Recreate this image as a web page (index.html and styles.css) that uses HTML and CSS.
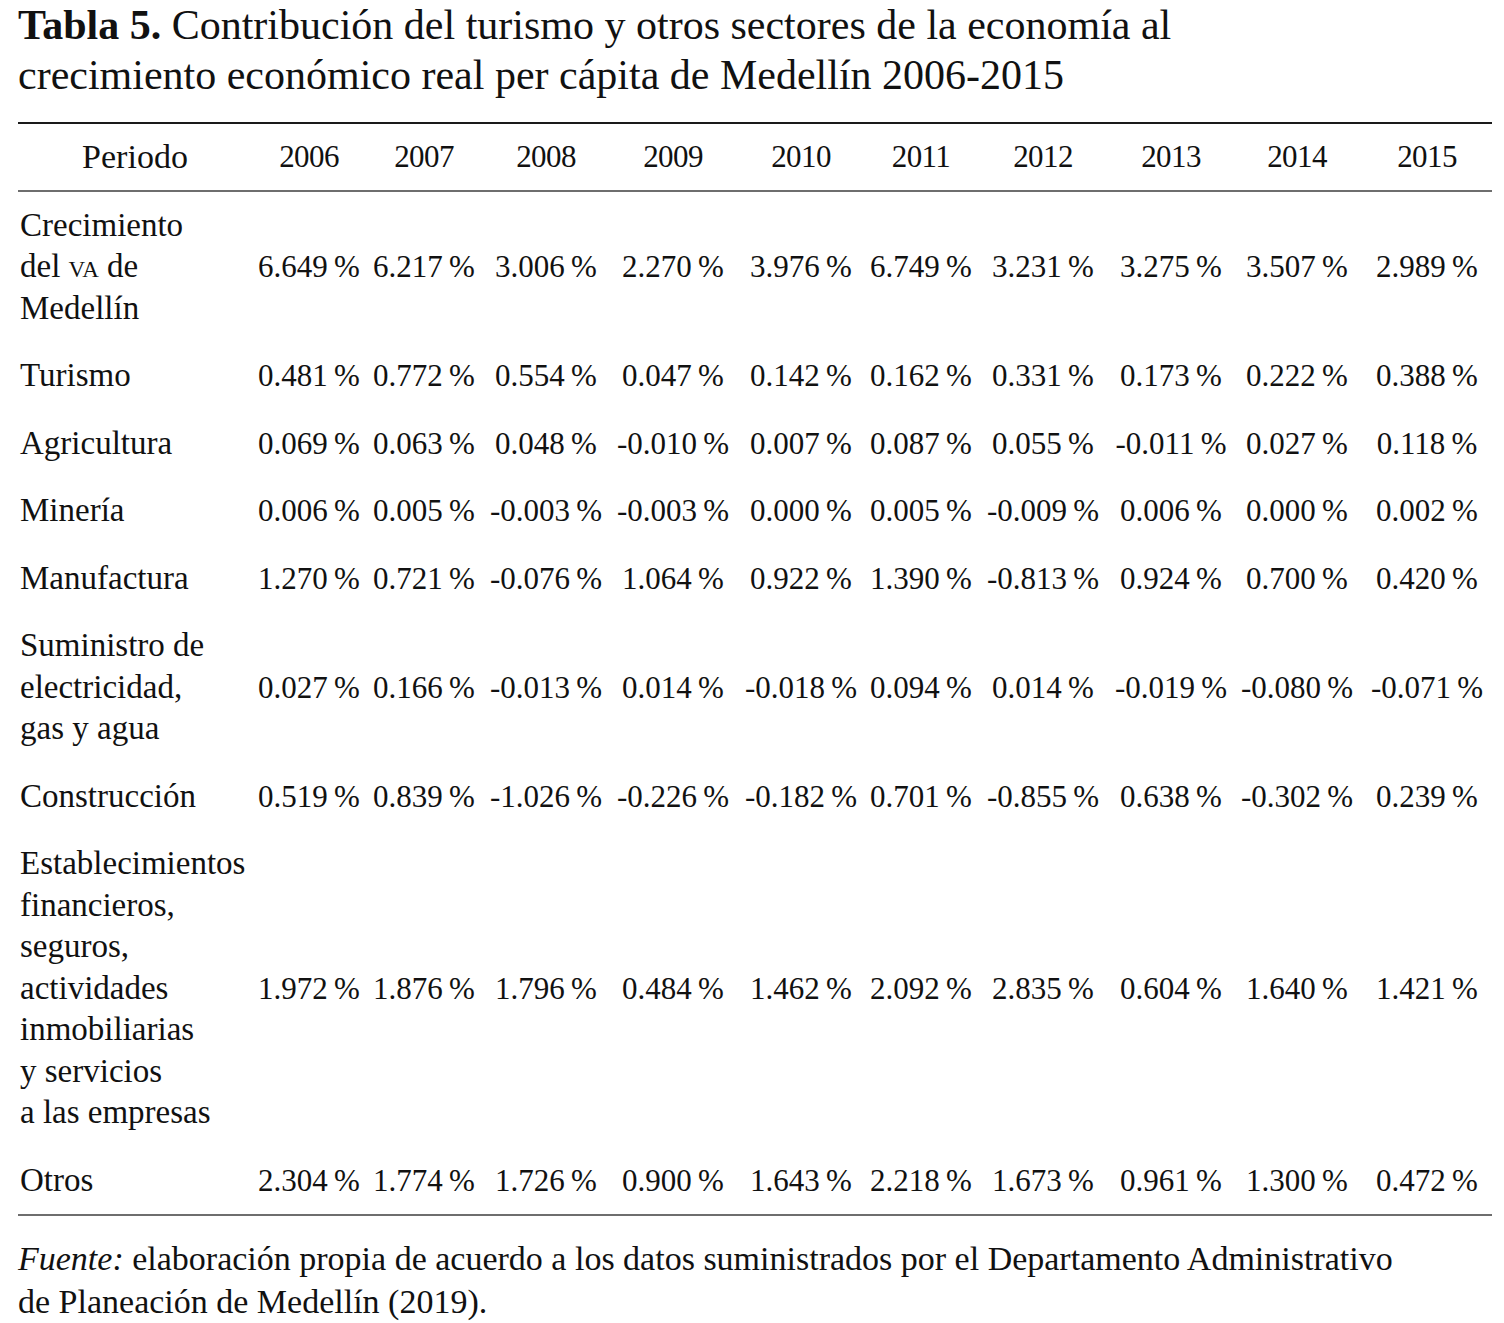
FILE: index.html
```html
<!DOCTYPE html>
<html lang="es">
<head>
<meta charset="utf-8">
<title>Tabla 5</title>
<link rel="stylesheet" href="styles.css">
</head>
<body>
<div class="page">
  <h1 class="caption"><b>Tabla 5.</b> Contribución del turismo y otros sectores de la economía al<br>crecimiento económico real per cápita de Medellín 2006-2015</h1>
  <table class="data">
    <colgroup>
      <col class="c-label">
      <col class="c1"><col class="c2"><col class="c3"><col class="c4"><col class="c5">
      <col class="c6"><col class="c7"><col class="c8"><col class="c9"><col class="c10">
    </colgroup>
    <thead>
      <tr>
        <th class="lab-h">Periodo</th>
        <th>2006</th><th>2007</th><th>2008</th><th>2009</th><th>2010</th>
        <th>2011</th><th>2012</th><th>2013</th><th>2014</th><th>2015</th>
      </tr>
    </thead>
    <tbody>
      <tr>
        <td class="lab">Crecimiento<br>del <span class="sc">va</span> de<br>Medellín</td>
        <td>6.649&#8239;%</td><td>6.217&#8239;%</td><td>3.006&#8239;%</td><td>2.270&#8239;%</td><td>3.976&#8239;%</td>
        <td>6.749&#8239;%</td><td>3.231&#8239;%</td><td>3.275&#8239;%</td><td>3.507&#8239;%</td><td>2.989&#8239;%</td>
      </tr>
      <tr>
        <td class="lab">Turismo</td>
        <td>0.481&#8239;%</td><td>0.772&#8239;%</td><td>0.554&#8239;%</td><td>0.047&#8239;%</td><td>0.142&#8239;%</td>
        <td>0.162&#8239;%</td><td>0.331&#8239;%</td><td>0.173&#8239;%</td><td>0.222&#8239;%</td><td>0.388&#8239;%</td>
      </tr>
      <tr>
        <td class="lab">Agricultura</td>
        <td>0.069&#8239;%</td><td>0.063&#8239;%</td><td>0.048&#8239;%</td><td>-0.010&#8239;%</td><td>0.007&#8239;%</td>
        <td>0.087&#8239;%</td><td>0.055&#8239;%</td><td>-0.011&#8239;%</td><td>0.027&#8239;%</td><td>0.118&#8239;%</td>
      </tr>
      <tr>
        <td class="lab">Minería</td>
        <td>0.006&#8239;%</td><td>0.005&#8239;%</td><td>-0.003&#8239;%</td><td>-0.003&#8239;%</td><td>0.000&#8239;%</td>
        <td>0.005&#8239;%</td><td>-0.009&#8239;%</td><td>0.006&#8239;%</td><td>0.000&#8239;%</td><td>0.002&#8239;%</td>
      </tr>
      <tr>
        <td class="lab">Manufactura</td>
        <td>1.270&#8239;%</td><td>0.721&#8239;%</td><td>-0.076&#8239;%</td><td>1.064&#8239;%</td><td>0.922&#8239;%</td>
        <td>1.390&#8239;%</td><td>-0.813&#8239;%</td><td>0.924&#8239;%</td><td>0.700&#8239;%</td><td>0.420&#8239;%</td>
      </tr>
      <tr>
        <td class="lab">Suministro de<br>electricidad,<br>gas y agua</td>
        <td>0.027&#8239;%</td><td>0.166&#8239;%</td><td>-0.013&#8239;%</td><td>0.014&#8239;%</td><td>-0.018&#8239;%</td>
        <td>0.094&#8239;%</td><td>0.014&#8239;%</td><td>-0.019&#8239;%</td><td>-0.080&#8239;%</td><td>-0.071&#8239;%</td>
      </tr>
      <tr>
        <td class="lab">Construcción</td>
        <td>0.519&#8239;%</td><td>0.839&#8239;%</td><td>-1.026&#8239;%</td><td>-0.226&#8239;%</td><td>-0.182&#8239;%</td>
        <td>0.701&#8239;%</td><td>-0.855&#8239;%</td><td>0.638&#8239;%</td><td>-0.302&#8239;%</td><td>0.239&#8239;%</td>
      </tr>
      <tr>
        <td class="lab">Establecimientos<br>financieros,<br>seguros,<br>actividades<br>inmobiliarias<br>y servicios<br>a las empresas</td>
        <td>1.972&#8239;%</td><td>1.876&#8239;%</td><td>1.796&#8239;%</td><td>0.484&#8239;%</td><td>1.462&#8239;%</td>
        <td>2.092&#8239;%</td><td>2.835&#8239;%</td><td>0.604&#8239;%</td><td>1.640&#8239;%</td><td>1.421&#8239;%</td>
      </tr>
      <tr>
        <td class="lab">Otros</td>
        <td>2.304&#8239;%</td><td>1.774&#8239;%</td><td>1.726&#8239;%</td><td>0.900&#8239;%</td><td>1.643&#8239;%</td>
        <td>2.218&#8239;%</td><td>1.673&#8239;%</td><td>0.961&#8239;%</td><td>1.300&#8239;%</td><td>0.472&#8239;%</td>
      </tr>
    </tbody>
  </table>
  <p class="source"><i>Fuente:</i> elaboración propia de acuerdo a los datos suministrados por el Departamento Administrativo<br>de Planeación de Medellín (2019).</p>
</div>
</body>
</html>
```

FILE: styles.css
```css
html, body {
  margin: 0;
  padding: 0;
  background: #ffffff;
}

body {
  font-family: "Liberation Serif", "Times New Roman", serif;
  color: #111111;
}

.page {
  width: 1474px;
  padding: 0 12px 0 18px;
}

.caption {
  margin: 0;
  padding-top: 0;
  font-size: 42px;
  font-weight: normal;
  line-height: 50px;
  color: #111;
}

.caption b {
  font-weight: bold;
}

.data {
  margin-top: 22px;
  width: 1474px;
  border-collapse: collapse;
  table-layout: fixed;
  border-top: 2px solid #1a1a1a;
  border-bottom: 2px solid #6e6e6e;
}

.c-label { width: 234px; }
.c1 { width: 114px; }
.c2 { width: 116px; }
.c3 { width: 128px; }
.c4 { width: 126px; }
.c5 { width: 130px; }
.c6 { width: 110px; }
.c7 { width: 134px; }
.c8 { width: 122px; }
.c9 { width: 130px; }
.c10 { width: 130px; }

.data th,
.data td {
  padding: 13px 0;
  font-size: 31px;
  font-weight: normal;
  line-height: 41.5px;
  text-align: center;
  vertical-align: middle;
  white-space: nowrap;
  letter-spacing: -0.6px;
}

.data thead th {
  border-bottom: 2px solid #6e6e6e;
  padding: 12px 0 12px;
}

.data .lab-h {
  font-size: 34px;
  letter-spacing: 0;
}

.data .lab {
  text-align: left;
  padding-left: 2px;
  font-size: 33px;
  letter-spacing: 0;
}

.sc {
  font-variant: small-caps;
}

.source {
  margin: 21px 0 0;
  font-size: 34px;
  line-height: 43px;
  color: #111;
}
```
